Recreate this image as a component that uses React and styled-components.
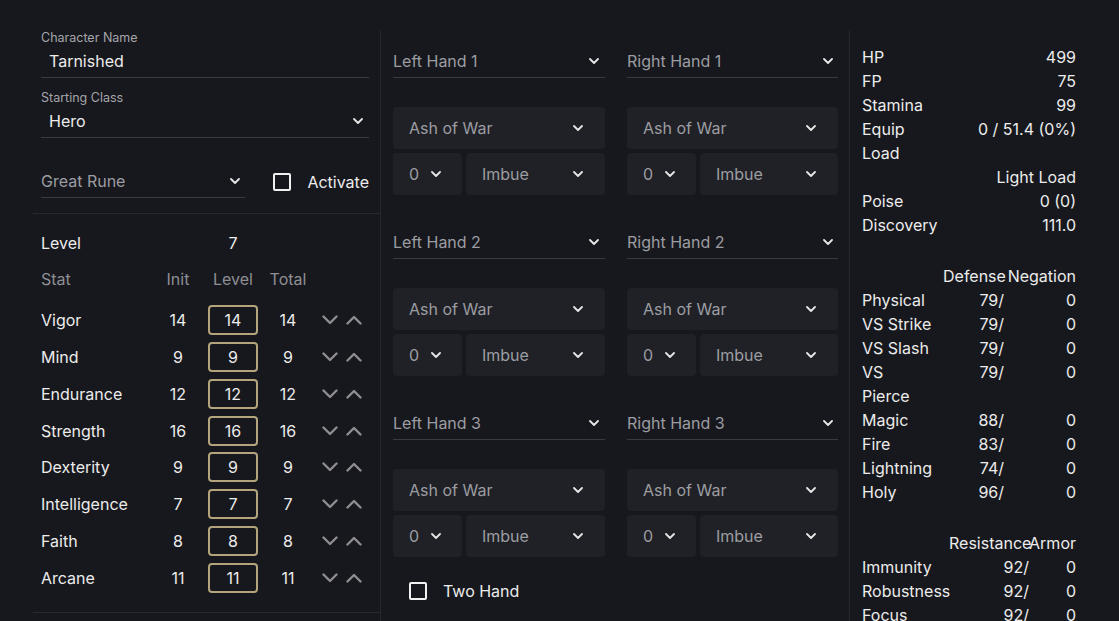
import React from "react";
import styled, { createGlobalStyle } from "styled-components";

const Global = createGlobalStyle`
  html, body { margin: 0; padding: 0; background: #17181d; }
  body { font-family: Inter, "Noto Sans", sans-serif; color: #ececec; font-size: 16px; }
  * { box-sizing: border-box; }
`;

const Page = styled.div`
  display: flex;
  align-items: stretch;
  padding: 30px 0 0 33px;
  height: 621px;
  overflow: hidden;
`;

const Column = styled.div`
  width: ${(p) => p.$w}px;
  padding: ${(p) => p.$pad};
  border-right: ${(p) => (p.$border ? "1px solid #25262b" : "none")};
  flex-shrink: 0;
`;

const Label = styled.div`
  font-size: 12.5px;
  line-height: 15px;
  color: #a5a6ab;
  margin-top: ${(p) => p.$mt || 0}px;
`;

const Underlined = styled.div`
  display: flex;
  align-items: center;
  justify-content: space-between;
  height: 33px;
  padding: 0 ${(p) => (p.$pr != null ? p.$pr : 6)}px 1px ${(p) => (p.$pl != null ? p.$pl : 8)}px;
  border-bottom: 1px solid #3a3b40;
  font-size: 16px;
  color: ${(p) => (p.$muted ? "#9c9da2" : "#ececec")};
  width: ${(p) => (p.$w ? p.$w + "px" : "100%")};
  margin-top: ${(p) => p.$mt || 0}px;
`;

const Chev = ({ color = "#e6e6e6", w = 10 }) => (
  <svg width={w} height={w * 0.6} viewBox="0 0 10 6" fill="none">
    <polyline points="1,1 5,5 9,1" stroke={color} strokeWidth="1.8" strokeLinecap="round" strokeLinejoin="round" />
  </svg>
);

const BigChev = ({ up }) => (
  <svg width="16" height="10" viewBox="0 0 16 10" fill="none">
    <polyline
      points={up ? "1.5,8.5 8,2 14.5,8.5" : "1.5,1.5 8,8 14.5,1.5"}
      stroke="#8e8e92"
      strokeWidth="2.4"
      strokeLinecap="round"
      strokeLinejoin="round"
    />
  </svg>
);

const RuneRow = styled.div`
  display: flex;
  align-items: flex-end;
  margin-top: 27px;
`;

const CheckWrap = styled.label`
  display: flex;
  align-items: center;
  gap: 16px;
  margin-left: ${(p) => p.$ml || 0}px;
  height: 33px;
  font-size: 16px;
  color: #ececec;
`;

const Box = styled.span`
  width: 18px;
  height: 18px;
  border: 2px solid #f2f2f2;
  border-radius: 2px;
  display: inline-block;
`;

const Divider = styled.div`
  height: 1px;
  background: #27282d;
  margin: ${(p) => p.$m};
  margin-left: -8px;
  margin-right: -11px;
`;

const StatGrid = styled.div`
  display: grid;
  grid-template-columns: 122px 30px 80px 30px auto;
  align-items: center;
`;

const Row = styled.div`
  display: contents;
`;

const Cell = styled.div`
  height: ${(p) => p.$h}px;
  margin-top: ${(p) => p.$mt || 0}px;
  display: flex;
  align-items: center;
  justify-content: ${(p) => (p.$c ? "center" : "flex-start")};
  color: ${(p) => (p.$muted ? "#8e8f94" : "#ececec")};
  font-size: 16px;
  white-space: nowrap;
`;

const LevelBox = styled.div`
  width: 50px;
  height: 30px;
  border: 2px solid #b3a47c;
  border-radius: 4px;
  display: flex;
  align-items: center;
  justify-content: center;
  color: #ececec;
`;

const Arrows = styled.div`
  display: flex;
  gap: 8px;
  padding-left: 19px;
`;

const HandGroups = styled.div`
  display: flex;
  flex-direction: column;
  gap: 31px;
  padding-top: 15px;
`;

const HandRow = styled.div`
  display: grid;
  grid-template-columns: 212px 211px;
  column-gap: 22px;
`;

const HandCol = styled.div`
  display: flex;
  flex-direction: column;
`;

const FilledSelect = styled.div`
  height: 42px;
  background: #202126;
  border-radius: 4px;
  display: flex;
  align-items: center;
  justify-content: space-between;
  padding: 0 ${(p) => p.$pr || 22}px 0 16px;
  color: #9c9da2;
  font-size: 16px;
  margin-top: ${(p) => p.$mt || 0}px;
  flex: ${(p) => (p.$grow ? 1 : "none")};
  width: ${(p) => (p.$w ? p.$w + "px" : "auto")};
`;

const FilledRow = styled.div`
  display: flex;
  gap: 4px;
  margin-top: 4px;
`;

const TwoHand = styled.div`
  padding: 17px 0 0 16px;
`;

const KV = styled.div`
  display: grid;
  grid-template-columns: ${(p) => p.$cols};
  line-height: 24px;
  font-size: 16px;
  color: #ececec;
  margin-top: ${(p) => p.$mt || 0}px;
`;

const Right = styled.div`
  text-align: right;
  white-space: nowrap;
`;

const Left = styled.div`
  white-space: nowrap;
`;

const stats = [
  ["Vigor", 14],
  ["Mind", 9],
  ["Endurance", 12],
  ["Strength", 16],
  ["Dexterity", 9],
  ["Intelligence", 7],
  ["Faith", 8],
  ["Arcane", 11],
];

const defense = [
  ["Physical", "79/", "0"],
  ["VS Strike", "79/", "0"],
  ["VS Slash", "79/", "0"],
  [["VS", "Pierce"], "79/", "0"],
  ["Magic", "88/", "0"],
  ["Fire", "83/", "0"],
  ["Lightning", "74/", "0"],
  ["Holy", "96/", "0"],
];

const resist = [
  ["Immunity", "92/", "0"],
  ["Robustness", "92/", "0"],
  ["Focus", "92/", "0"],
];

function Hand({ side, n }) {
  return (
    <HandCol>
      <Underlined $muted $pl={0} $pr={side === "Left" ? 6 : 5}>
        <span>{side} Hand {n}</span>
        <Chev />
      </Underlined>
      <FilledSelect $mt={29}>
        <span>Ash of War</span>
        <Chev />
      </FilledSelect>
      <FilledRow>
        <FilledSelect $w={69} $pr={21}>
          <span>0</span>
          <Chev />
        </FilledSelect>
        <FilledSelect $grow>
          <span>Imbue</span>
          <Chev />
        </FilledSelect>
      </FilledRow>
    </HandCol>
  );
}

export default function App() {
  return (
    <>
      <Global />
      <Page>
        <Column $w={348} $pad="0 11px 0 8px" $border>
          <Label>Character Name</Label>
          <Underlined>Tarnished</Underlined>
          <Label $mt={12}>Starting Class</Label>
          <Underlined>
            <span>Hero</span>
            <Chev />
          </Underlined>
          <RuneRow>
            <Underlined $muted $w={207} $pl={0} $pr={5}>
              <span>Great Rune</span>
              <Chev />
            </Underlined>
            <CheckWrap $ml={28}>
              <Box />
              Activate
            </CheckWrap>
          </RuneRow>
          <Divider $m="15px 0 0 0" />
          <StatGrid>
            <Row>
              <Cell $h={24} $mt={17}>Level</Cell>
              <Cell $h={24} $mt={17} />
              <Cell $h={24} $mt={17} $c>7</Cell>
              <Cell $h={24} $mt={17} />
              <Cell $h={24} $mt={17} />
            </Row>
            <Row>
              <Cell $h={24} $mt={12} $muted>Stat</Cell>
              <Cell $h={24} $mt={12} $muted $c>Init</Cell>
              <Cell $h={24} $mt={12} $muted $c>Level</Cell>
              <Cell $h={24} $mt={12} $muted $c>Total</Cell>
              <Cell $h={24} $mt={12} />
            </Row>
            {stats.map(([name, v], i) => {
              const mt = i === 0 ? 14 : 6.85;
              return (
                <Row key={name}>
                  <Cell $h={30} $mt={mt}>{name}</Cell>
                  <Cell $h={30} $mt={mt} $c>{v}</Cell>
                  <Cell $h={30} $mt={mt} $c><LevelBox>{v}</LevelBox></Cell>
                  <Cell $h={30} $mt={mt} $c>{v}</Cell>
                  <Cell $h={30} $mt={mt}>
                    <Arrows>
                      <BigChev />
                      <BigChev up />
                    </Arrows>
                  </Cell>
                </Row>
              );
            })}
          </StatGrid>
          <Divider $m="19px 0 0 0" />
        </Column>

        <Column $w={469} $pad="0 12px" $border>
          <HandGroups>
            {[1, 2, 3].map((n) => (
              <HandRow key={n}>
                <Hand side="Left" n={n} />
                <Hand side="Right" n={n} />
              </HandRow>
            ))}
          </HandGroups>
          <TwoHand>
            <CheckWrap>
              <Box />
              Two Hand
            </CheckWrap>
          </TwoHand>
        </Column>

        <Column $w={238} $pad="15px 12px 0 12px">
          <KV $cols="1fr auto">
            <Left>HP</Left><Right>499</Right>
            <Left>FP</Left><Right>75</Right>
            <Left>Stamina</Left><Right>99</Right>
            <Left>Equip<br />Load</Left><Right>0 / 51.4 (0%)</Right>
            <Left></Left><Right>Light Load</Right>
            <Left>Poise</Left><Right>0 (0)</Right>
            <Left>Discovery</Left><Right>111.0</Right>
          </KV>
          <KV $cols="81px 61px 72px" $mt={27}>
            <Left></Left><Right>Defense</Right><Right>Negation</Right>
            {defense.map(([n, a, b], i) => (
              <React.Fragment key={i}>
                <Left>{Array.isArray(n) ? <>{n[0]}<br />{n[1]}</> : n}</Left>
                <Right>{a}</Right>
                <Right>{b}</Right>
              </React.Fragment>
            ))}
          </KV>
          <KV $cols="87px 80px 47px" $mt={27}>
            <Left></Left><Right>Resistance</Right><Right>Armor</Right>
            {resist.map(([n, a, b], i) => (
              <React.Fragment key={i}>
                <Left>{n}</Left>
                <Right>{a}</Right>
                <Right>{b}</Right>
              </React.Fragment>
            ))}
          </KV>
        </Column>
      </Page>
    </>
  );
}
